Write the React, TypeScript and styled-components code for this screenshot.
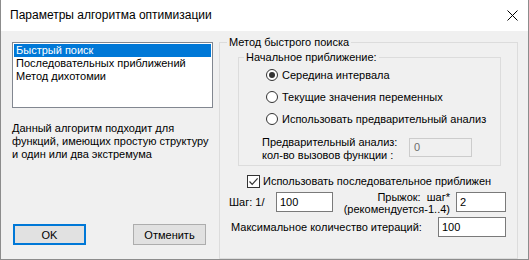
import React from 'react'
import styled, { createGlobalStyle } from 'styled-components'

const GlobalStyle = createGlobalStyle`
  html, body {
    margin: 0;
    padding: 0;
    background: #f0f0f0;
  }
  * {
    box-sizing: border-box;
  }
`

const methods = ['Быстрый поиск', 'Последовательных приближений', 'Метод дихотомии']

const startOptions = [
  'Середина интервала',
  'Текущие значения переменных',
  'Использовать предварительный анализ',
]

export default function App() {
  return (
    <>
      <GlobalStyle />
      <Window>
        <TitleBar>
          <Title>Параметры алгоритма оптимизации</Title>
          <CloseIcon />
        </TitleBar>
        <Body>
          <LeftColumn>
            <ListBox>
              {methods.map((m, i) => (
                <ListItem key={m} selected={i === 0}>
                  {m}
                </ListItem>
              ))}
            </ListBox>
            <Description>
              Данный алгоритм подходит для
              <br />
              функций, имеющих простую структуру
              <br />
              и один или два экстремума
            </Description>
            <ButtonRow>
              <DefaultButton>OK</DefaultButton>
              <Button>Отменить</Button>
            </ButtonRow>
          </LeftColumn>

          <OuterGroup>
            <Legend>Метод быстрого поиска</Legend>
            <OuterBody>
              <InnerGroup>
                <InnerLegend>Начальное приближение:</InnerLegend>
                <InnerBody>
                  {startOptions.map((opt, i) => (
                    <RadioRow key={opt}>
                      <RadioCircle checked={i === 0} />
                      {opt}
                    </RadioRow>
                  ))}
                  <PreRow>
                    <PreLabel>
                      Предварительный анализ:
                      <br />
                      кол-во вызовов функции :
                    </PreLabel>
                    <DisabledInput>0</DisabledInput>
                  </PreRow>
                </InnerBody>
              </InnerGroup>

              <CheckRow>
                <CheckBox>
                  <svg width="11" height="11" viewBox="0 0 11 11">
                    <path d="M1.5 5.5 L4.2 8.3 L9.6 2.4" fill="none" stroke="#333" strokeWidth="1.2" />
                  </svg>
                </CheckBox>
                <CheckText>Использовать последовательное приближен</CheckText>
              </CheckRow>

              <StepRow>
                <StepLabel>Шаг: 1/</StepLabel>
                <TextBox width={57}>100</TextBox>
                <JumpLabel>
                  Прыжок:&nbsp; шаг*
                  <br />
                  (рекомендуется-1..4)
                </JumpLabel>
                <TextBox width={50}>2</TextBox>
              </StepRow>

              <MaxRow>
                <MaxLabel>Максимальное количество итераций:</MaxLabel>
                <TextBox width={68}>100</TextBox>
              </MaxRow>
            </OuterBody>
          </OuterGroup>
        </Body>
      </Window>
    </>
  )
}

function CloseIcon() {
  return (
    <svg width="11" height="11" viewBox="0 0 11 11">
      <path d="M0.5 0.5 L10.5 10.5 M10.5 0.5 L0.5 10.5" stroke="#000" strokeWidth="1" />
    </svg>
  )
}

const Window = styled.div`
  width: 529px;
  height: 260px;
  display: flex;
  flex-direction: column;
  background: #f0f0f0;
  border: 1px solid #8c8c8c;
  border-top: none;
  font-family: 'Liberation Sans', Arial, sans-serif;
  font-size: 11px;
  color: #000;
`

const TitleBar = styled.div`
  height: 31px;
  flex: none;
  display: flex;
  align-items: center;
  justify-content: space-between;
  padding: 0 10px 0 9px;
  background: #fff;
`

const Title = styled.div`
  font-size: 12px;
  color: #000;
  padding-bottom: 1px;
`

const Body = styled.div`
  flex: 1;
  display: flex;
  gap: 6px;
  padding: 5px 0 0 11px;
`

const LeftColumn = styled.div`
  width: 201px;
  display: flex;
  flex-direction: column;
  padding: 6px 0 14px;
`

const ListBox = styled.div`
  height: 66px;
  border: 1px solid #828790;
  background: #fff;
  padding: 1px;
`

const ListItem = styled.div<{ selected?: boolean }>`
  height: 13px;
  line-height: 13px;
  padding-left: 2px;
  white-space: nowrap;
  background: ${p => (p.selected ? '#0078d7' : 'transparent')};
  color: ${p => (p.selected ? '#fff' : '#000')};
`

const Description = styled.div`
  margin-top: 14px;
  line-height: 13px;
  white-space: nowrap;
`

const ButtonRow = styled.div`
  margin-top: auto;
  display: flex;
  gap: 47px;
  padding-left: 1px;
`

const Button = styled.div`
  width: 73px;
  height: 21px;
  display: flex;
  align-items: center;
  justify-content: center;
  background: #e1e1e1;
  border: 1px solid #adadad;
`

const DefaultButton = styled(Button)`
  border: 2px solid #0078d7;
`

const OuterGroup = styled.fieldset`
  width: 299px;
  margin: 0;
  padding: 0;
  min-width: 0;
  border: 1px solid #dcdcdc;
`

const Legend = styled.legend`
  margin-left: 7px;
  padding: 0 2px;
  line-height: 13px;
`

const InnerLegend = styled(Legend)`
  margin-left: 5px;
`

const OuterBody = styled.div`
  display: flex;
  flex-direction: column;
  padding: 0 11px 5px 0;
`

const InnerGroup = styled.fieldset`
  width: 263px;
  margin: 2px 0 0 18px;
  padding: 0;
  min-width: 0;
  border: 1px solid #dcdcdc;
`

const InnerBody = styled.div`
  display: flex;
  flex-direction: column;
  padding: 0 0 3px 27px;
`

const RadioRow = styled.div`
  height: 22px;
  display: flex;
  align-items: center;
  gap: 4px;
  white-space: nowrap;
`

const RadioCircle = styled.span<{ checked?: boolean }>`
  width: 12px;
  height: 12px;
  flex: none;
  border-radius: 50%;
  border: 1px solid #333;
  background: #fff;
  display: flex;
  align-items: center;
  justify-content: center;

  &::after {
    content: '';
    width: 6px;
    height: 6px;
    border-radius: 50%;
    background: ${p => (p.checked ? '#333' : 'transparent')};
  }
`

const PreRow = styled.div`
  display: flex;
  align-items: flex-start;
  margin: 6px 0 0 -4px;
`

const PreLabel = styled.div`
  width: 147px;
  line-height: 13px;
  white-space: nowrap;
`

const DisabledInput = styled.div`
  width: 63px;
  height: 19px;
  margin-top: 2px;
  padding-left: 4px;
  line-height: 17px;
  border: 1px solid #cccccc;
  background: #f0f0f0;
  color: #6d6d6d;
`

const CheckRow = styled.div`
  height: 20px;
  margin-top: 5px;
  padding-left: 27px;
  display: flex;
  align-items: center;
  gap: 3px;
`

const CheckBox = styled.span`
  width: 13px;
  height: 13px;
  flex: none;
  border: 1px solid #333;
  background: #fff;
  display: flex;
  align-items: center;
  justify-content: center;
`

const CheckText = styled.span`
  white-space: nowrap;
  overflow: hidden;
`

const StepRow = styled.div`
  height: 22px;
  padding-left: 9px;
  display: flex;
  align-items: center;
`

const StepLabel = styled.span`
  width: 47px;
  white-space: nowrap;
`

const JumpLabel = styled.div`
  flex: 1;
  padding-right: 6px;
  text-align: right;
  line-height: 12px;
  white-space: nowrap;
  margin-top: 2px;
`

const TextBox = styled.div<{ width: number }>`
  width: ${p => p.width}px;
  height: 20px;
  flex: none;
  padding-left: 3px;
  line-height: 18px;
  border: 1px solid #7a7a7a;
  background: #fff;
`

const MaxRow = styled.div`
  height: 21px;
  margin-top: 3px;
  padding-left: 11px;
  display: flex;
  align-items: center;
  justify-content: space-between;
`

const MaxLabel = styled.span`
  white-space: nowrap;
`
